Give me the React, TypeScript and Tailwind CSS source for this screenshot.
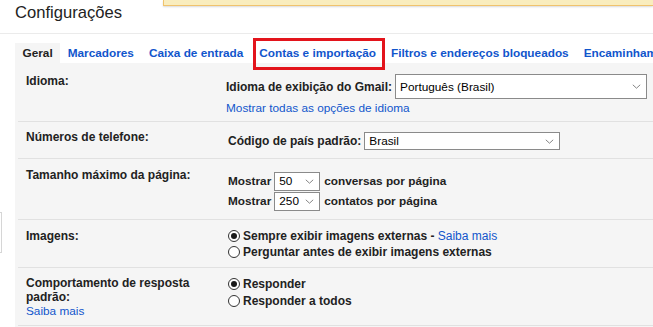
import React from "react";

function Chevron() {
  return (
    <svg width="9" height="5" viewBox="0 0 9 5" className="shrink-0">
      <polyline points="0.8,0.8 4.5,4.2 8.2,0.8" fill="none" stroke="#777" strokeWidth="0.9" />
    </svg>
  );
}

function Select({ text, className }: { text: string; className: string }) {
  return (
    <div
      className={
        "flex items-center justify-between bg-white border border-[#8a8a8a] pl-[4px] pr-[5px] font-normal text-[11.8px] text-black " +
        className
      }
    >
      <span>{text}</span>
      <Chevron />
    </div>
  );
}

function Radio({ checked }: { checked?: boolean }) {
  return (
    <span className="w-[12px] h-[12px] rounded-full border border-[#333] bg-white flex items-center justify-center shrink-0 mr-[3px]">
      {checked ? <span className="w-[6px] h-[6px] rounded-full bg-[#1a1a1a]" /> : null}
    </span>
  );
}

function Divider() {
  return <div className="ml-[3px] h-px bg-[#e1e1e1]" />;
}

export default function App() {
  const tabs = [
    "Geral",
    "Marcadores",
    "Caixa de entrada",
    "Contas e importação",
    "Filtros e endereços bloqueados",
    "Encaminhamento e POP/IMAP",
  ];
  return (
    <div className="relative w-[653px] h-[327px] overflow-hidden bg-white font-['Liberation_Sans',Arial,sans-serif] text-[#222] text-[12px]">
      {/* notification bar */}
      <div className="absolute top-0 left-[163px] right-0 h-[6px] bg-[#f9edbe] border-l border-b border-[#f0c36d] shadow-[0_1px_2px_rgba(0,0,0,0.15)]" />
      {/* left edge artifact */}
      <div className="absolute left-0 top-[212px] w-[2px] h-[41px] border-r border-y border-[#d6d6d6]" />

      <div className="pl-[15px] pt-[3px] h-[33px] text-[16.6px] leading-[20px] text-[#222]">Configurações</div>
      <div className="h-px bg-[#ebebeb]" />

      <div className="mt-[9px] ml-[15px] flex whitespace-nowrap text-[11.8px]">
        {tabs.map((t, i) => (
          <div
            key={t}
            className={
              "relative h-[20px] flex items-center font-bold leading-[14px] " +
              (i === 2 ? "pl-[7.5px] pr-[8.5px] " : "px-[7.5px] ") +
              (i === 0 ? "bg-[#f5f5f5] text-[#222]" : "text-[#1155cc]")
            }
          >
            {t}
            {i === 3 ? (
              <span className="absolute left-[1px] right-[-1px] top-[-5px] bottom-[-7px] border-[3px] border-[#e3141c]" />
            ) : null}
          </div>
        ))}
      </div>

      <div className="ml-[15px] bg-[#f5f5f5] font-bold leading-[14px] whitespace-nowrap">
        {/* Row 1 */}
        <div className="flex h-[58px]">
          <div className="w-[211px] pl-[11px] pt-[11px]">Idioma:</div>
          <div className="pt-[11px]">
            <div className="flex items-center h-[25px]">
              <span>Idioma de exibição do Gmail:</span>
              <Select text="Português (Brasil)" className="ml-[3px] w-[252px] h-[25px]" />
            </div>
            <div className="mt-[2px] font-normal text-[11.8px] text-[#1155cc]">Mostrar todas as opções de idioma</div>
          </div>
        </div>
        <Divider />

        {/* Row 2 */}
        <div className="flex h-[36px]">
          <div className="w-[211px] pl-[11px] pt-[8px]">Números de telefone:</div>
          <div className="pt-[10px] pl-[2px]">
            <div className="flex items-center h-[18px]">
              <span>Código de país padrão:</span>
              <Select text="Brasil" className="ml-[3px] w-[196px] h-[18px]" />
            </div>
          </div>
        </div>
        <Divider />

        {/* Row 3 */}
        <div className="flex h-[60px]">
          <div className="w-[211px] pl-[11px] pt-[9px]">Tamanho máximo da página:</div>
          <div className="pt-[12px] pl-[2px] text-[11.8px]">
            <div className="flex items-center h-[20px]">
              <span>Mostrar</span>
              <Select text="50" className="ml-[3px] w-[46px] h-[19px]" />
              <span className="ml-[4px]">conversas por página</span>
            </div>
            <div className="flex items-center h-[20px]">
              <span>Mostrar</span>
              <Select text="250" className="ml-[3px] w-[46px] h-[19px]" />
              <span className="ml-[4px]">contatos por página</span>
            </div>
          </div>
        </div>
        <Divider />

        {/* Row 4 */}
        <div className="flex h-[47px]">
          <div className="w-[211px] pl-[11px] pt-[9px]">Imagens:</div>
          <div className="pt-[8px] pl-[2px]">
            <div className="flex items-center h-[16px]">
              <Radio checked />
              <span>Sempre exibir imagens externas -&nbsp;</span>
              <span className="font-normal text-[#1155cc]">Saiba mais</span>
            </div>
            <div className="flex items-center h-[16px]">
              <Radio />
              <span>Perguntar antes de exibir imagens externas</span>
            </div>
          </div>
        </div>
        <Divider />

        {/* Row 5 */}
        <div className="flex h-[57px]">
          <div className="w-[211px] pl-[11px] pt-[8px]">
            <div>Comportamento de resposta</div>
            <div>padrão:</div>
            <div className="font-normal text-[11.8px] text-[#1155cc]">Saiba mais</div>
          </div>
          <div className="pt-[7px] pl-[2px]">
            <div className="flex items-center h-[17px]">
              <Radio checked />
              <span>Responder</span>
            </div>
            <div className="flex items-center h-[17px]">
              <Radio />
              <span>Responder a todos</span>
            </div>
          </div>
        </div>
        <Divider />
        <div className="h-[10px]" />
      </div>
    </div>
  );
}
